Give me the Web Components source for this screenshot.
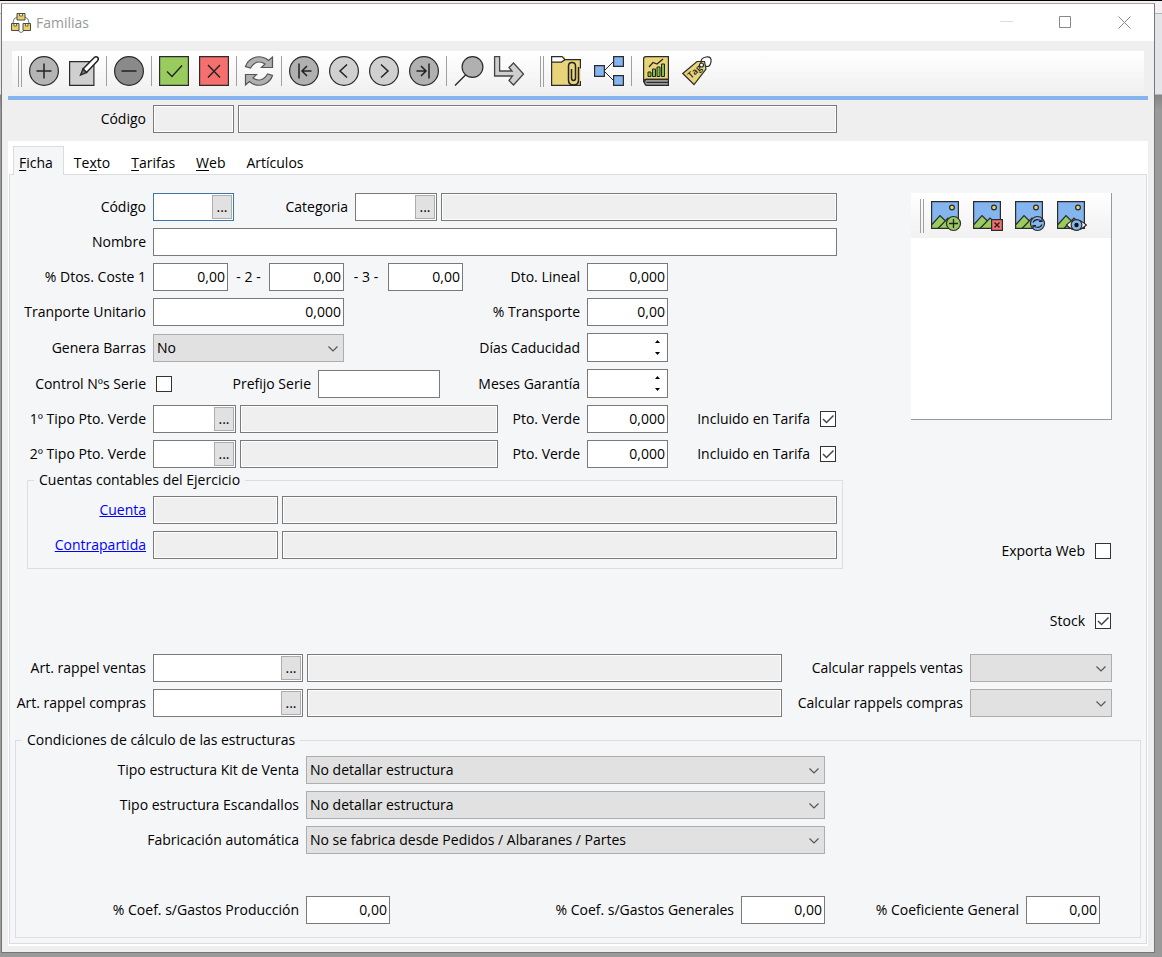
<!DOCTYPE html>
<html lang="es">
<head>
<meta charset="utf-8">
<title>Familias</title>
<style>
html{height:100%}
body{margin:0;min-height:100%;font:14px/20px "Open Sans","Noto Sans",sans-serif;color:#000;
background:linear-gradient(#000 0 1px,#f3eff3 1px 13px,#b4b4b8 13px 14px,#e3e5e8 14px 94px,#858585 95px,#9a9a9a 110px)}
</style>
</head>
<body>
<familias-app></familias-app>

<template id="t-window">
<style>
:host{display:block;margin:3px 7px 4px 1px;border:1px solid #777;border-top-color:#aaa3aa;background:#efefef}
header{display:flex;align-items:center;height:37px;background:#fff;color:#999;padding-left:9px}
h1{flex:1;margin:0 0 0 5px;font:inherit}
header>svg{width:20px;height:20px;flex:none}
button{width:59px;height:36px;padding:0;border:0;background:none;display:grid;place-items:center}
button svg{width:13px;height:13px}
</style>
<header>
<svg viewBox="0 0 20 20" fill="#e8d06a" stroke="#4a4a4a" stroke-width="1"><path d="M6 4Q2 5 2 10M14 4q4 1 4 6M7 16q0 3 3 3.500q3-.5 3-3.500" fill="none" stroke="#777"/><path d="M6 .5h8v6.500H6zM.5 10.500h7.500v7H.5zM12 10.500h7.500v7H12z"/><path d="M8.500 1v2h3V1M3 11v2h2.500v-2M14.500 11v2h2.500v-2" fill="#fff3b0" stroke-width=".8"/></svg>
<h1><slot name="title"></slot></h1>
<button aria-label="Minimizar"><svg viewBox="0 0 13 13"><path d="M0 5.500h13" stroke="#ddd"/></svg></button>
<button aria-label="Maximizar"><svg viewBox="0 0 13 13"><path d="M.5.5h11v11H.5z" fill="none" stroke="#888"/></svg></button>
<button aria-label="Cerrar"><svg viewBox="0 0 13 13"><path d="M.5.5l12 12M12.500.5l-12 12" stroke="#888"/></svg></button>
</header>
<slot></slot>
</template>

<template id="t-toolbar">
<style>
:host{display:flex;align-items:center;gap:7px;box-sizing:border-box;height:41px;padding-left:6px;background:linear-gradient(#fff,#f1f1f1)}
</style>
<slot></slot>
</template>

<template id="t-tabs">
<style>
:host{display:block;margin:8px 6px 6px;padding:5px 1px 2px;background:#fff}
[role=tablist]{display:flex;padding-left:4px}
button{font:inherit;height:28px;padding:5px 11px 0 10px;border:0;background:none;color:inherit}
button[aria-selected=true]{height:29px;margin-bottom:-1px;padding:4px 10px 0 5px;border:1px solid #dcdcdc;border-bottom:0;background:#f5f6f8;position:relative}
u{text-underline-offset:2px}
section{border:1px solid #dcdcdc;background:#f5f6f8;padding:18px 5px 5px}
</style>
<div role="tablist">
<button role="tab" aria-selected="true"><u>F</u>icha</button>
<button role="tab">Te<u>x</u>to</button>
<button role="tab"><u>T</u>arifas</button>
<button role="tab"><u>W</u>eb</button>
<button role="tab">Artículos</button>
</div>
<section role="tabpanel" aria-label="Ficha"><slot></slot></section>
</template>

<template id="t-group">
<style>
:host{display:block}
fieldset{min-width:0;margin:0;padding:6px 0 0;border:1px solid #dcdfe2}
legend{padding:0 5px;margin-left:6px;line-height:20px}
div{display:flex;flex-direction:column;gap:7px}
</style>
<fieldset><legend></legend><div><slot></slot></div></fieldset>
</template>

<template id="t-picture">
<style>
:host{display:flex;flex-direction:column;box-sizing:border-box;height:227px;border:solid #999;border-width:0 1px 1px 0;background:#fff}
tool-bar{height:45px;padding-left:9px}
</style>
<tool-bar>
<tool-grip style="--h:34px"></tool-grip>
<tool-button icon="imgadd" label="Añadir imagen"></tool-button>
<tool-button icon="imgdel" label="Quitar imagen"></tool-button>
<tool-button icon="imgsync" label="Actualizar imagen"></tool-button>
<tool-button icon="imgview" label="Ver imagen"></tool-button>
</tool-bar>
</template>

<template id="t-app">
<style>
:host{display:flow-root}
.main{margin:10px 10px 4px;padding-bottom:1px}
.main tool-button+tool-button{margin-left:3px}
.main .wide+.wide{margin-left:6px}
.main .second{margin-left:9px}
.rule{height:4px;margin:0 6px 5px;background:#84b5ee}
.head{margin:0 317px 0 13px}
.row,.pair{display:flex;gap:7px}
.pair{gap:4px;min-width:0}
.grow{flex:1;min-width:0}
.upper{display:grid;grid-template-columns:minmax(0,1fr) 201px;gap:74px;padding-right:29px}
.stack{display:flex;flex-direction:column;gap:7px}
.stack>ui-group{margin:-5px -6px 0 12px}
.r4{display:grid;grid-template-columns:minmax(0,1fr) 163px 162px;gap:7px}
.side{display:flex;flex-direction:column;align-items:flex-end;gap:50px}
.side picture-box{align-self:stretch;margin-bottom:71px}
.rappel{margin:23px 29px 13px 0}
.a{--l:131px}.in{--l:118px}.b{--l:283px}.p{--l:75px}
.kit{margin-right:315px}
.coef{margin:35px 40px 13px 0}
.accounts{margin:0 5px 9px 0}
.accounts:not(:last-child){margin-bottom:0}
</style>
<app-window>
<span slot="title">Familias</span>
<tool-bar class="main">
<tool-grip></tool-grip>
<tool-button icon="add" label="Nuevo"></tool-button>
<tool-button icon="edit" label="Editar"></tool-button>
<tool-sep></tool-sep>
<tool-button icon="minus" label="Borrar"></tool-button>
<tool-sep></tool-sep>
<tool-button icon="ok" label="Aceptar"></tool-button>
<tool-button icon="cancel" label="Cancelar"></tool-button>
<tool-sep></tool-sep>
<tool-button icon="sync" label="Refrescar"></tool-button>
<tool-sep></tool-sep>
<tool-button icon="first" label="Primero"></tool-button>
<tool-button icon="prev" label="Anterior"></tool-button>
<tool-button icon="next" label="Siguiente"></tool-button>
<tool-button icon="last" label="Último"></tool-button>
<tool-sep></tool-sep>
<tool-button icon="find" label="Buscar"></tool-button>
<tool-button icon="go" label="Ir a"></tool-button>
<tool-grip class="second"></tool-grip>
<tool-button class="wide" icon="folder" label="Adjuntos"></tool-button>
<tool-button class="wide" icon="tree" label="Relaciones"></tool-button>
<tool-sep></tool-sep>
<tool-button class="wide" icon="book" label="Informes"></tool-button>
<tool-button class="wide" icon="tag" label="Etiquetas"></tool-button>
</tool-bar>
<div class="rule"></div>
<div class="pair head">
<ui-field class="a" kind="readonly" label="Código" style="--w:81px"></ui-field>
<ui-field class="grow" kind="readonly" name="Descripción"></ui-field>
</div>
<ui-tabs>
<div class="upper">
<div class="stack">
<div class="row">
<ui-field class="a" kind="lookup" label="Código" focused style="--w:81px"></ui-field>
<div class="pair grow">
<ui-field kind="lookup" label="Categoria" style="--l:107px;--w:82px"></ui-field>
<ui-field class="grow" kind="readonly" name="Nombre de categoria"></ui-field>
</div>
</div>
<ui-field class="a" kind="text" label="Nombre"></ui-field>
<div class="r4">
<div class="row">
<ui-field class="a" kind="number" label="% Dtos. Coste 1" value="0,00" style="--w:75px"></ui-field>
<ui-field class="mid" kind="number" label="- 2 -" value="0,00" style="--l:27px;--w:75px"></ui-field>
<ui-field class="mid" kind="number" label="- 3 -" value="0,00" style="--l:30px;--w:75px"></ui-field>
</div>
<ui-field class="p" kind="number" label="Dto. Lineal" value="0,000"></ui-field>
</div>
<div class="r4">
<div class="row"><ui-field class="a" kind="number" label="Tranporte Unitario" value="0,000" style="--w:191px"></ui-field></div>
<ui-field class="p" kind="number" label="% Transporte" value="0,00"></ui-field>
</div>
<div class="r4">
<div class="row"><ui-field class="a" kind="select" label="Genera Barras" value="No" style="--w:191px"></ui-field></div>
<ui-field class="p" kind="spin" label="Días Caducidad"></ui-field>
</div>
<div class="r4">
<div class="row">
<ui-check class="a" label="Control Nºs Serie"></ui-check>
<ui-field class="a" kind="text" label="Prefijo Serie" style="--w:122px"></ui-field>
</div>
<ui-field class="p" kind="spin" label="Meses Garantía"></ui-field>
</div>
<div class="r4">
<div class="pair">
<ui-field class="a" kind="lookup" label="1º Tipo Pto. Verde" style="--w:83px"></ui-field>
<ui-field class="grow" kind="readonly" name="Descripción 1º tipo"></ui-field>
</div>
<ui-field class="p" kind="number" label="Pto. Verde" value="0,000"></ui-field>
<ui-check label="Incluido en Tarifa" checked></ui-check>
</div>
<div class="r4">
<div class="pair">
<ui-field class="a" kind="lookup" label="2º Tipo Pto. Verde" style="--w:83px"></ui-field>
<ui-field class="grow" kind="readonly" name="Descripción 2º tipo"></ui-field>
</div>
<ui-field class="p" kind="number" label="Pto. Verde" value="0,000"></ui-field>
<ui-check label="Incluido en Tarifa" checked></ui-check>
</div>
<ui-group legend="Cuentas contables del Ejercicio">
<div class="pair accounts">
<ui-field class="in" kind="readonly" label="Cuenta" link style="--w:125px"></ui-field>
<ui-field class="grow" kind="readonly" name="Nombre de cuenta"></ui-field>
</div>
<div class="pair accounts">
<ui-field class="in" kind="readonly" label="Contrapartida" link style="--w:125px"></ui-field>
<ui-field class="grow" kind="readonly" name="Nombre de contrapartida"></ui-field>
</div>
</ui-group>
</div>
<div class="side">
<picture-box></picture-box>
<ui-check label="Exporta Web"></ui-check>
<ui-check label="Stock" checked></ui-check>
</div>
</div>
<div class="stack rappel">
<div class="row">
<div class="pair grow">
<ui-field class="a" kind="lookup" label="Art. rappel ventas" style="--w:150px"></ui-field>
<ui-field class="grow" kind="readonly" name="Artículo rappel ventas"></ui-field>
</div>
<ui-field kind="select" label="Calcular rappels ventas" style="--l:174px;--w:142px"></ui-field>
</div>
<div class="row">
<div class="pair grow">
<ui-field class="a" kind="lookup" label="Art. rappel compras" style="--w:150px"></ui-field>
<ui-field class="grow" kind="readonly" name="Artículo rappel compras"></ui-field>
</div>
<ui-field kind="select" label="Calcular rappels compras" style="--l:174px;--w:142px"></ui-field>
</div>
</div>
<ui-group legend="Condiciones de cálculo de las estructuras">
<ui-field class="b kit" kind="select" label="Tipo estructura Kit de Venta" value="No detallar estructura"></ui-field>
<ui-field class="b kit" kind="select" label="Tipo estructura Escandallos" value="No detallar estructura"></ui-field>
<ui-field class="b kit" kind="select" label="Fabricación automática" value="No se fabrica desde Pedidos / Albaranes / Partes"></ui-field>
<div class="row coef">
<ui-field class="b" kind="number" label="% Coef. s/Gastos Producción" value="0,00" style="--w:84px"></ui-field>
<ui-field class="grow" kind="number" label="% Coef. s/Gastos Generales" value="0,00" style="--l:1fr;--w:84px"></ui-field>
<ui-field kind="number" label="% Coeficiente General" value="0,00" style="--l:187px;--w:74px"></ui-field>
</div>
</ui-group>
</ui-tabs>
</app-window>
</template>

<script>
const S = 'stroke="#2b2b2b" stroke-width="1.2"';
const disc = (fill, inner) => `<circle cx="15" cy="15" r="14.4" fill="${fill}" ${S}/><path d="${inner}" fill="none" stroke="#222" stroke-width="1.5"/>`;
const picture = extra => `<path d="M.5.5h27v27H.5z" fill="#84b5ee"/><path d="M1 23.500l8-9 5 5 3.500-3 10 11H1z" fill="#99cc5e"/><path d="M1 23.500l8-9 5.500 5.500M7 27.500l10-10.500 8 7" fill="none" ${S}/><path d="M.6.6h26.800v26.800H.6z" fill="none" ${S}/><circle cx="21" cy="6.500" r="2.400" fill="#e8d06a" ${S}/>${extra}`;
const ICONS = {
add: disc('#b4b4b4', 'M15 7.500v15M7.500 15h15'),
edit: `<path d="M.6 5.600h24.300v23.800H.6z" fill="#cfcfcf" ${S}/><path d="M14 13L25 1.800q2-1.800 3.600-.4t-.2 3.600L17.500 16.500z" fill="#fff" stroke="#222" stroke-width="1.500"/><path d="M11.500 19l2.500-6 3.500 3.500z" fill="#777" stroke="#222" stroke-width="1.300"/>`,
minus: disc('#8a8a8a', 'M7.500 15h15'),
ok: `<path d="M.6.6h28.800v28.800H.6z" fill="#99cc5e" ${S}/><path d="M8 15.500l5 5L23 9.500" fill="none" stroke="#222" stroke-width="1.4"/>`,
cancel: `<path d="M.6.6h28.800v28.800H.6z" fill="#f56f6f" ${S}/><path d="M9 9l12 12.500M21 9L9 21.500" stroke="#222" stroke-width="1.4"/>`,
sync: `<path d="M1.500 10.500C4 3 13-2 22 2.500L24.500 4.500L28.500 1V11.500H17.500L21 8C16 4.500 10 5.500 6.500 12z" fill="#b0b0b0" stroke="#555" stroke-width="1.200"/><path d="M28.500 19.500C26 27 17 32 8 27.500L5.500 25.500L1.500 29V18.500H12.500L9 22C14 25.500 20 24.500 23.500 18z" fill="#b0b0b0" stroke="#555" stroke-width="1.200"/>`,
first: disc('#b0b0b0', 'M10 7.500v15M22.500 15H13.500M18 10l-5 5 5 5'),
prev: disc('#d0d0d0', 'M18 8.500L11 15l7 6.500'),
next: disc('#d0d0d0', 'M12 8.500L19 15l-7 6.500'),
last: disc('#b0b0b0', 'M20 7.500v15M7.500 15H16.500M12 10l5 5-5 5'),
find: `<path d="M1 29.500L12 18.500" stroke="#2b2b2b" stroke-width="1.5"/><circle cx="18.500" cy="11" r="10.400" fill="#b0b0b0" ${S}/>`,
go: `<path d="M.6.6h5v14.400H18l-3-3.500 4.500-4.500L29.500 18 19.500 29l-4.500-4.500 3.500-4.500H.6z" fill="#cfcfcf" stroke="#444" stroke-width="1.300"/>`,
folder: `<path d="M.6.6h13l1 3h14.800v25.800H.6z" fill="#e8d47a" stroke="none"/><path d="M14 3.600h15.400v9M29.400 25v4.400H.6V.6" fill="none" ${S}/><path d="M.6.6H11l3 3-3.500 2.500H.6z" fill="#fff" ${S}/><path d="M20.500 13v9q0 2.500 2 2.500t2-2.500v-12q0-3.500-3.500-3.500T17.500 10v14q0 5 5 5t5-5V11" fill="none" stroke="#222" stroke-width="1.5"/>`,
tree: `<path d="M10 15L20 5M10 15L20 25" stroke="#222"/><path d="M.6 9.600h9.800v10.800H.6zM19.600.6h9.800v9.800h-9.800zM19.600 19.600h9.800v9.800h-9.800z" fill="#84b5ee" ${S}/>`,
book: `<path d="M7 .6h22.400v22.800H7q-2.400 0-2.400 3V3q0-2.400 2.400-2.400z" fill="#e8d47a" ${S}/><path d="M29.400 23.400H7q-3 3 0 6h22.400z" fill="#999" ${S}/><path d="M7.500 26.400h22" ${S}/><path d="M9 16h3v4.500H9zM13.500 13h3v7.500h-3zM18 11h3v9.500h-3zM22.500 8h3v12.500h-3z" fill="#7cc142" stroke="#222"/><path d="M10 11l4-4.500 4 1.500 6-5" fill="none" stroke="#222" stroke-width="1.200"/>`,
tag: `<path d="M.8 17.500L15 5.500h7.500l1.500 7.500L12 28.500z" fill="#e8d47a" ${S}/><circle cx="19.500" cy="9" r="2" fill="#fff" ${S}/><path d="M19 8q-1-6 5-7t5 5-6 4" fill="none" ${S}/><text x="9" y="23" font-family="Open Sans,sans-serif" font-size="9" font-weight="600" fill="#222" transform="rotate(-42 9 23)">Tag</text>`,
imgadd: picture(`<circle cx="22.500" cy="22.500" r="7" fill="#99cc5e" ${S}/><path d="M22.500 18v9M18 22.500h9" stroke="#222" stroke-width="1.300"/>`),
imgdel: picture(`<path d="M18.600 18.600h10.800v10.800H18.600z" fill="#f56f6f" ${S}/><path d="M21.500 21.500l5 5M26.500 21.500l-5 5" stroke="#222" stroke-width="1.400"/>`),
imgsync: picture(`<circle cx="22.500" cy="22.500" r="7" fill="#84b5ee" ${S}/><path d="M18 21.500q2-4 6.500-2.500l2 1.500M27 17.500v3h-3M27 23.500q-2 4-6.500 2.500l-2-1.500M18 27.500v-3h3" fill="none" stroke="#222" stroke-width="1.200"/>`),
imgview: picture(`<path d="M9.500 24q9.500-10 19.800 0-10 10-19.800 0z" fill="#fff" ${S}/><circle cx="19.500" cy="24" r="5.400" fill="#84b5ee" ${S}/><circle cx="19.500" cy="24" r="2.200" fill="#111"/>`)
};

class Base extends HTMLElement {
  mount(markup) {
    const root = this.attachShadow({mode: 'open'});
    if (markup instanceof HTMLTemplateElement) root.append(markup.content.cloneNode(true));
    else root.innerHTML = markup;
    return root;
  }
}
const fromTemplate = id => class extends Base {
  constructor() { super(); this.mount(document.getElementById(id)); }
};

customElements.define('tool-grip', class extends Base {
  connectedCallback() {
    if (!this.shadowRoot) this.mount(`<style>:host{display:block;box-sizing:border-box;flex:none;width:4px;height:var(--h,31px);border:solid #a0a0a0;border-width:0 1px}</style>`);
  }
});
customElements.define('tool-sep', class extends Base {
  connectedCallback() {
    if (!this.shadowRoot) this.mount(`<style>:host{display:block;flex:none;width:1px;height:30px;background:#a0a0a0}</style>`);
  }
});
customElements.define('tool-button', class extends Base {
  connectedCallback() {
    if (this.shadowRoot) return;
    this.mount(`<style>:host{display:block;flex:none}button{display:block;width:30px;height:30px;padding:0;border:0;background:none}svg{display:block;width:30px;height:30px;overflow:visible}:host(:not(:first-of-type)[icon^=img]){margin-left:5px}</style>
<button aria-label="${this.getAttribute('label')}"><svg viewBox="0 0 30 30">${ICONS[this.getAttribute('icon')]}</svg></button>`);
  }
});

customElements.define('ui-field', class extends Base {
  connectedCallback() {
    if (this.shadowRoot) return;
    const kind = this.getAttribute('kind');
    const label = this.getAttribute('label');
    const value = this.getAttribute('value') || '';
    const name = this.getAttribute('name') || label;
    let control = `<input id="c" type="text" value="${value}" aria-label="${name}"${kind === 'readonly' ? ' readonly' : ''}>`;
    if (kind === 'select') control = `<select id="c" aria-label="${name}"><option>${value}</option></select><svg class="chev" viewBox="0 0 10 6"><path d="M.5.5L5 5 9.500.5" fill="none" stroke="#555" stroke-width="1.200"/></svg>`;
    if (kind === 'lookup') control += `<button class="dots" aria-label="Buscar ${name}">...</button>`;
    if (kind === 'spin') control += `<span class="spin"><button aria-label="Aumentar"><svg viewBox="0 0 5 3"><path d="M0 3L2.500 0 5 3z"/></svg></button><button aria-label="Disminuir"><svg viewBox="0 0 5 3"><path d="M0 0L2.500 3 5 0z"/></svg></button></span>`;
    const text = !label ? '' : this.hasAttribute('link')
      ? `<a class="lab" href="#cuenta">${label}</a>` : `<label class="lab" for="c">${label}</label>`;
    this.mount(`<style>
:host{display:grid;grid-template-columns:${label ? 'var(--l) ' : ''}var(--w,minmax(0,1fr));gap:7px;align-items:center}
.lab{white-space:nowrap;justify-self:end;display:flex;justify-content:flex-end;max-width:100%}
:host(.mid) .lab{justify-self:center}
a{color:#00f}
.box{display:flex;position:relative;box-sizing:border-box;height:${kind === 'spin' ? 29 : 28}px;border:1px solid #7a7a7a;background:#fff;padding:1px}
:host([focused]) .box{border-color:#3f74a6}
:host([kind=select]) .box{border-color:#adadad;background:#e1e1e1;padding:0}
input,select{font:inherit;color:inherit;flex:1;width:0;min-width:0;margin:0;padding:0 2px;border:0;outline:0;border-radius:0;background:none;appearance:none}
:host([kind=number]) input{text-align:right;padding:0 1px}
:host([kind=readonly]) input{background:#efefef}
select{padding:0 20px 0 3px}
.chev{position:absolute;right:5px;top:11px;width:10px;height:6px}
.dots{box-sizing:border-box;flex:none;width:20px;height:24px;padding:0;border:1px solid #adadad;background:#e1e1e1;font:inherit;color:#000;line-height:22px}
.spin{display:flex;flex-direction:column;justify-content:space-evenly;width:17px}
.spin button{display:grid;place-items:center;height:11px;padding:0;border:0;background:none}
.spin svg{width:5px;height:3px}
</style>${text}<div class="box">${control}</div>`);
  }
});

customElements.define('ui-check', class extends Base {
  connectedCallback() {
    if (this.shadowRoot) return;
    this.mount(`<style>
:host{display:flex;align-items:center;justify-content:flex-end}
label{display:flex;justify-content:flex-end;white-space:nowrap;width:var(--l,auto)}
span{position:relative;display:block;width:16px;height:16px;margin:0 1px 0 10px}
input{appearance:none;box-sizing:border-box;display:block;width:16px;height:16px;margin:0;border:1px solid #333;background:#fff}
svg{position:absolute;inset:0;pointer-events:none;visibility:hidden}
input:checked+svg{visibility:visible}
</style><label for="c">${this.getAttribute('label')}</label><span><input id="c" type="checkbox"${this.hasAttribute('checked') ? ' checked' : ''}><svg viewBox="0 0 16 16"><path d="M3 8l3.500 3.500L13.500 4.500" fill="none" stroke="#444" stroke-width="1.500"/></svg></span>`);
  }
});

customElements.define('tool-bar', fromTemplate('t-toolbar'));
customElements.define('app-window', fromTemplate('t-window'));
customElements.define('ui-tabs', fromTemplate('t-tabs'));
customElements.define('ui-group', class extends fromTemplate('t-group') {
  connectedCallback() { this.shadowRoot.querySelector('legend').textContent = this.getAttribute('legend'); }
});
customElements.define('picture-box', fromTemplate('t-picture'));
customElements.define('familias-app', fromTemplate('t-app'));
</script>
</body>
</html>
